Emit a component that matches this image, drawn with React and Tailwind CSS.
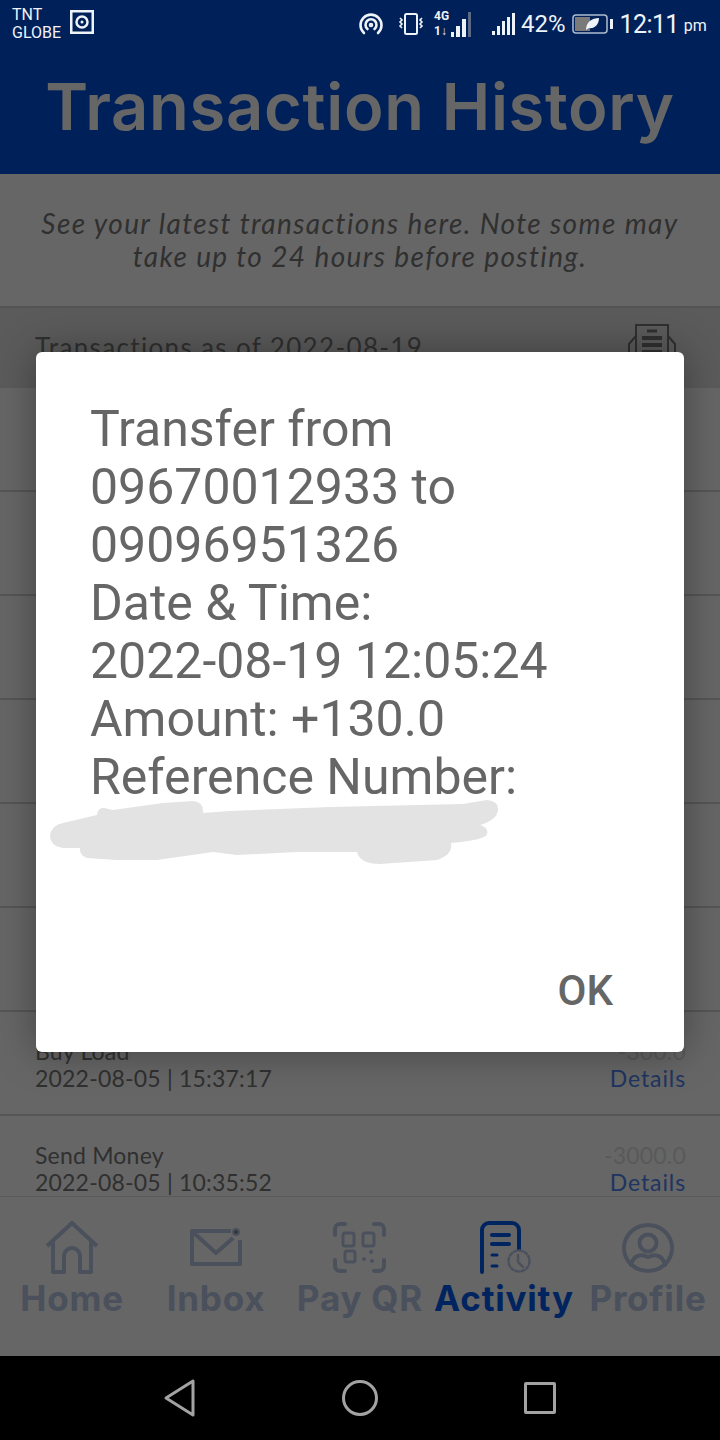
import React from 'react'

// rows above these sit behind the dialog, so they stay blank
const rows = [
  { id: 1 },
  { id: 2 },
  { id: 3 },
  { id: 4 },
  { id: 5 },
  { id: 6 },
  { id: 7, title: 'Buy Load', date: '2022-08-05 | 15:37:17', amount: '-300.0' },
  { id: 8, title: 'Send Money', date: '2022-08-05 | 10:35:52', amount: '-3000.0' },
]

function HomeIcon() {
  return (
    <svg width="60" height="54" viewBox="0 0 60 54" fill="none" stroke="currentColor" strokeWidth="4" strokeLinejoin="round">
      <path d="M5 25 L30 2 L55 25" />
      <path d="M11 20 V51 H22 V35 a8 8 0 0 1 16 0 V51 H49 V20" />
    </svg>
  )
}

function InboxIcon() {
  return (
    <svg width="60" height="54" viewBox="0 0 60 54" fill="none" stroke="currentColor" strokeWidth="4" strokeLinejoin="round">
      <path d="M45 10 H6 V43 H54 V19" />
      <path d="M8 12 L30 32 L47 17" />
      <circle cx="50" cy="11" r="3" strokeWidth="2" fill="#888" />
    </svg>
  )
}

function QrIcon() {
  return (
    <svg width="60" height="54" viewBox="0 0 60 54" fill="none" stroke="currentColor" strokeWidth="4" strokeLinecap="round">
      <path d="M5 14 V8 a5 5 0 0 1 5 -5 H15" />
      <path d="M44 3 H49 a5 5 0 0 1 5 5 V14" />
      <path d="M5 39 V45 a5 5 0 0 0 5 5 H15" />
      <path d="M54 39 V45 a5 5 0 0 1 -5 5 H44" />
      <rect x="13" y="12" width="11" height="13" rx="2" strokeWidth="3" />
      <rect x="33" y="12" width="11" height="13" rx="2" strokeWidth="3" />
      <rect x="15" y="30" width="10" height="11" rx="2" strokeWidth="3" />
      <circle cx="34" cy="38" r="1" strokeWidth="2" />
      <circle cx="41" cy="31" r="1" strokeWidth="2" />
      <circle cx="42" cy="40" r="1" strokeWidth="2" />
    </svg>
  )
}

function ActivityIcon() {
  return (
    <svg width="60" height="54" viewBox="0 0 60 54" fill="none" stroke="currentColor" strokeWidth="4" strokeLinecap="round">
      <path d="M8 51 V9 a7 7 0 0 1 7 -7 H38 a7 7 0 0 1 7 7 V28" />
      <path d="M18 14 H35" />
      <path d="M18 23 H35" />
      <path d="M18 34 H23" strokeWidth="3" />
      <path d="M18 45 H23" strokeWidth="3" />
      <g stroke="#b9c8e6" strokeWidth="2.5">
        <circle cx="45" cy="40" r="10.5" strokeDasharray="3 2.5" />
        <path d="M44 34 V41 L49 46" />
      </g>
    </svg>
  )
}

function ProfileIcon() {
  return (
    <svg width="60" height="54" viewBox="0 0 60 54" fill="none" stroke="currentColor" strokeWidth="4" strokeLinecap="round">
      <ellipse cx="30" cy="27" rx="24" ry="23" />
      <circle cx="30" cy="22" r="8.5" />
      <path d="M13 44 C15 35 22 32 30 36 C38 32 45 35 47 44" />
    </svg>
  )
}

const navItems = [
  { label: 'Home', Icon: HomeIcon },
  { label: 'Inbox', Icon: InboxIcon },
  { label: 'Pay QR', Icon: QrIcon },
  { label: 'Activity', Icon: ActivityIcon, active: true },
  { label: 'Profile', Icon: ProfileIcon },
]

function StatusBar() {
  return (
    <div className="h-12 shrink-0 bg-[#00205a] flex items-center text-[#eef3f8] font-['Roboto',sans-serif]">
      <div className="ml-3 w-[54px] text-[16px] leading-[18px]">
        <div>TNT</div>
        <div>GLOBE</div>
      </div>
      <svg className="ml-1 -mt-1" width="24" height="24" viewBox="0 0 24 24">
        <rect x="1" y="1" width="22" height="22" fill="none" stroke="#eef3f8" strokeWidth="3" />
        <circle cx="12" cy="12" r="5.5" fill="none" stroke="#eef3f8" strokeWidth="2.5" />
        <circle cx="12" cy="12" r="1.5" fill="#eef3f8" />
      </svg>
      <svg className="ml-[265px]" width="24" height="24" viewBox="0 0 24 24" fill="none" stroke="#eef3f8" strokeWidth="2.6" strokeLinecap="round">
        <path d="M5 21 A10.5 10.5 0 1 1 19 21" />
        <path d="M8.5 17 A5.5 5.5 0 1 1 15.5 17" />
        <circle cx="12" cy="13" r="1" />
      </svg>
      <svg className="ml-[14px]" width="28" height="24" viewBox="0 0 28 24" fill="none" stroke="#eef3f8" strokeWidth="1.6">
        <rect x="8" y="2" width="12" height="20" rx="1.5" strokeWidth="2" />
        <path d="M3 6 l2 2 -2 2 2 2 -2 2 2 2" />
        <path d="M25 6 l-2 2 2 2 -2 2 2 2 -2 2" />
      </svg>
      <div className="ml-[9px] w-[38px] h-7 relative">
        <span className="absolute left-0 top-0 text-[12px] leading-[13px] font-bold">4G</span>
        <span className="absolute left-0 top-[15px] text-[12px] leading-[13px] font-bold">1↓</span>
        <svg className="absolute left-0 top-0" width="38" height="28" viewBox="0 0 38 28" fill="#eef3f8">
          <rect x="17" y="22" width="3" height="5" />
          <rect x="22" y="16" width="4" height="11" />
          <rect x="28" y="9" width="4" height="18" />
          <rect x="34" y="2" width="3" height="25" fill="#5c6b85" />
        </svg>
      </div>
      <svg className="ml-[19px]" width="24" height="24" viewBox="0 0 24 24" fill="#eef3f8">
        <rect x="1" y="19" width="3" height="4" />
        <rect x="6" y="14" width="3" height="9" />
        <rect x="11" y="9" width="3" height="14" />
        <rect x="16" y="5" width="3" height="18" />
        <rect x="21" y="1" width="3" height="22" />
      </svg>
      <span className="ml-[6px] text-[24px] leading-none">42%</span>
      <svg className="ml-[6px]" width="41" height="22" viewBox="0 0 41 22">
        <rect x="1" y="2" width="34" height="18" rx="3" fill="none" stroke="#aebccd" strokeWidth="1.5" />
        <rect x="3" y="4" width="15" height="14" fill="#7a7a7a" />
        <path d="M14 17 C14 9 20 5 27 5 C27 12 22 16 17 15 Z" fill="#eef3f8" />
        <rect x="38" y="6" width="3" height="10" fill="#eef3f8" />
      </svg>
      <span className="ml-[7px] text-[25px] tracking-[-0.6px] leading-none">12:11</span>
      <span className="ml-[5px] mt-1 text-[16px] leading-none">pm</span>
    </div>
  )
}

export default function App() {
  return (
    <div className="relative w-[720px] h-[1440px] overflow-hidden flex flex-col bg-white font-['Lato',sans-serif]">
      <StatusBar />

      {/* Page title */}
      <div className="h-[126px] shrink-0 bg-[#0050e1] flex items-center justify-center">
        <h1 className="font-['Inter',sans-serif] font-semibold text-[65px] tracking-[0.7px] leading-none text-white -mt-[10px] whitespace-nowrap">Transaction History</h1>
      </div>

      <div className="h-[134px] shrink-0 border-b-2 border-[#d0d0d0] pt-[33px] text-center italic text-[28px] tracking-[1.4px] leading-[33px] text-[#787878] whitespace-nowrap">
        <p>See your latest transactions here. Note some may</p>
        <p>take up to 24 hours before posting.</p>
      </div>

      <div className="h-[80px] shrink-0 bg-[#e4e4e4] flex justify-between items-start px-[35px] pt-[24px]">
        <p className="text-[26px] tracking-[1.35px] leading-[30px] text-[#787878]">Transactions as of 2022-08-19</p>
        <svg className="-mt-[10px] mr-[8px]" width="50" height="50" viewBox="0 0 50 50" fill="none" stroke="#787878" strokeWidth="2">
          <path d="M9 30 V3 H41 V30" />
          <path d="M9 14 L2 22 V48 H48 V22 L41 14" />
          <path d="M20 9 H30" strokeWidth="3" />
          <path d="M15 16 H35 M15 23 H35 M15 30 H35" strokeWidth="4" />
        </svg>
      </div>

      {/* Transaction rows */}
      <div className="flex-1 overflow-hidden">
        {rows.map((row) => (
          <div key={row.id} className="h-[104px] shrink-0 border-b-2 border-[#d5d5d5] pl-[35px] pr-[34px] pt-[26px] flex justify-between text-[23px] tracking-[0.2px] leading-[27px]">
            {row.title && (
              <>
                <div className="text-[#787878]">
                  <p>{row.title}</p>
                  <p>{row.date}</p>
                </div>
                <div className="text-right">
                  <p className="text-[#dfdfdf]">{row.amount}</p>
                  <p className="text-[#4e85f0] tracking-[0.9px]">Details</p>
                </div>
              </>
            )}
          </div>
        ))}
      </div>

      {/* Bottom tabs */}
      <div className="h-[160px] shrink-0 border-t border-[#e0e0e0] grid grid-cols-5 pt-[24px] font-['Inter',sans-serif] bg-white">
        {navItems.map(({ label, Icon, active }) => (
          <div key={label} className={`flex flex-col items-center ${active ? 'text-[#005aee]' : 'text-[#b9c8e6]'}`}>
            <Icon />
            <span className="mt-[3px] text-[35px] tracking-[0.8px] leading-[40px] font-bold whitespace-nowrap">{label}</span>
          </div>
        ))}
      </div>

      {/* System navigation */}
      <div className="relative z-10 h-[84px] shrink-0 bg-black grid grid-cols-3 items-center px-[90px]">
        <svg className="justify-self-center" width="36" height="40" viewBox="0 0 36 40" fill="none" stroke="#a3a3a3" strokeWidth="3" strokeLinejoin="round">
          <path d="M31 3 V37 L4 20 Z" />
        </svg>
        <div className="justify-self-center w-[36px] h-[36px] rounded-full border-[3px] border-[#a3a3a3]" />
        <div className="justify-self-center w-[32px] h-[32px] rounded-[2px] border-[3px] border-[#a3a3a3]" />
      </div>

      {/* Dim layer behind dialog */}
      <div className="absolute left-0 right-0 top-12 bottom-[84px] bg-black/60" />

      {/* Dialog */}
      <div className="absolute left-[36px] top-[352px] w-[648px] h-[700px] bg-white rounded-[6px] shadow-[0_0_40px_rgba(0,0,0,0.35)] font-['Roboto',sans-serif] text-[#666666]">
        <div className="pt-[48px] pl-[54px] pr-[40px] text-[50px] leading-[58px] whitespace-nowrap">
          <p>Transfer from</p>
          <p>09670012933 to</p>
          <p>09096951326</p>
          <p>Date &amp; Time:</p>
          <p>2022-08-19 12:05:24</p>
          <p>Amount: +130.0</p>
          <p>Reference Number:</p>
        </div>
        <svg className="absolute left-[14px] top-[448px]" width="450" height="66" viewBox="50 800 450 66">
          <path
            fill="#e3e3e3"
            d="M50 835 Q52 825 63 823 L97 815 Q98 807 104 808 L113 810 L163 803 L193 801 Q204 802 203 813 L230 811 L330 807 L463 804 L487 800 Q499 801 498 810 Q497 820 480 825 Q489 828 487 834 Q486 840 451 843 Q453 855 437 860 L380 864 Q360 864 357 852 L297 852 L237 855 L213 852 L157 860 L117 860 L87 858 Q79 855 80 848 L63 848 Q50 846 50 835 Z"
          />
        </svg>
        <button className="absolute right-[71px] top-[615px] text-[42px] leading-[48px] font-medium text-[#666666]">OK</button>
      </div>
    </div>
  )
}
